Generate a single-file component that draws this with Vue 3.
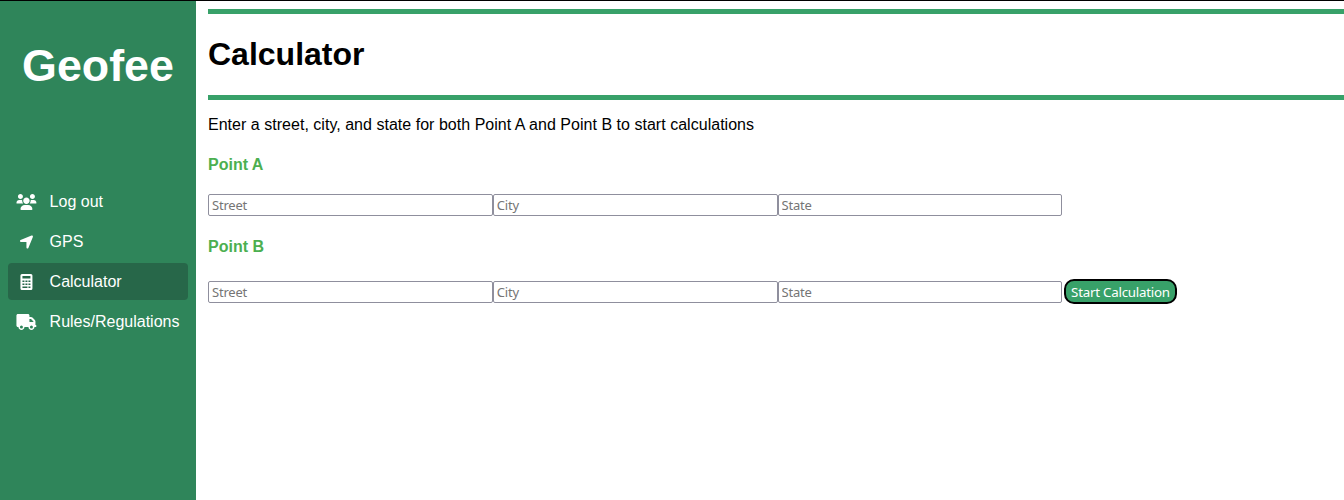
<script setup>
const links = [
  {
    label: 'Log out',
    width: 20,
    box: '-14 0 640 512',
    path: 'M319.9 320c57.41 0 103.1-46.56 103.1-104c0-57.44-46.54-104-103.1-104c-57.41 0-103.1 46.56-103.1 104C215.9 273.4 262.5 320 319.9 320zM369.9 352H270.1C191.6 352 128 411.7 128 485.3C128 500.1 140.7 512 156.4 512h327.2C499.3 512 512 500.1 512 485.3C512 411.7 448.4 352 369.9 352zM512 160c44.18 0 80-35.82 80-80S556.2 0 512 0c-44.18 0-80 35.82-80 80S467.8 160 512 160zM183.9 216c0-5.449 .9824-10.63 1.609-15.91C174.6 194.1 162.6 192 149.9 192H88.08C39.44 192 0 233.8 0 285.3C0 295.6 7.887 304 17.62 304h199.5C196.7 280.2 183.9 249.7 183.9 216zM128 160c44.18 0 80-35.82 80-80S172.2 0 128 0C83.82 0 48 35.82 48 80S83.82 160 128 160zM551.9 192h-61.84c-12.8 0-24.88 3.037-35.86 8.24C454.8 205.5 455.8 210.6 455.8 216c0 33.71-12.78 64.21-33.16 88h199.7C632.1 304 640 295.6 640 285.3C640 233.8 600.6 192 551.9 192z',
  },
  {
    label: 'GPS',
    width: 14,
    box: '-14 0 448 512',
    path: 'M429.6 92.1c4.9-11.9 2.1-25.6-7-34.7s-22.8-11.9-34.7-7l-352 144c-14.2 5.8-22.2 20.8-19.3 35.8s16.1 25.8 31.4 25.8H224V432c0 15.3 10.8 28.4 25.8 31.4s30-5.1 35.8-19.3l144-352z',
  },
  {
    label: 'Calculator',
    width: 12,
    box: '-14 0 384 512',
    active: true,
    path: 'M48 0H336Q384 0 384 48V464Q384 512 336 512H48Q0 512 0 464V48Q0 0 48 0zM64 64V144H320V64zM64 208V256H128V208zM160 208V256H224V208zM256 208V256H320V208zM64 304V352H128V304zM160 304V352H224V304zM256 304V352H320V304zM64 400V448H224V400zM256 400V448H320V400z',
  },
  {
    label: 'Rules/Regulations',
    width: 20,
    box: '-14 0 640 512',
    path: 'M48 0C21.5 0 0 21.5 0 48V368c0 26.5 21.5 48 48 48H64c0 53 43 96 96 96s96-43 96-96H384c0 53 43 96 96 96s96-43 96-96h32c17.7 0 32-14.3 32-32s-14.3-32-32-32V288 256 237.3c0-17-6.7-33.3-18.7-45.3L512 114.7c-12-12-28.3-18.7-45.3-18.7H416V48c0-26.5-21.5-48-48-48H48zM416 160h50.7L544 237.3V256H416V160zM112 416a48 48 0 1 1 96 0 48 48 0 1 1 -96 0zm368-48a48 48 0 1 1 0 96 48 48 0 1 1 0-96z',
  },
]
const fields = ['Street', 'City', 'State']
</script>

<template>
  <div class="page">
    <aside class="sidebar">
      <div class="brand">Geofee</div>
      <nav class="menu">
        <a v-for="l in links" :key="l.label" class="link" :class="{ active: l.active }">
          <span class="icon">
            <svg :width="l.width" height="16" :viewBox="l.box"><path :d="l.path" fill="currentColor" fill-rule="evenodd" /></svg>
          </span>
          <span>{{ l.label }}</span>
        </a>
      </nav>
    </aside>
    <main class="content">
      <header class="title"><h1>Calculator</h1></header>
      <p class="intro">Enter a street, city, and state for both Point A and Point B to start calculations</p>
      <h4 class="point">Point A</h4>
      <div class="row row-a">
        <input v-for="f in fields" :key="f" type="text" :placeholder="f" />
      </div>
      <h4 class="point">Point B</h4>
      <div class="row row-b">
        <input v-for="f in fields" :key="f" type="text" :placeholder="f" />
        <button type="button">Start Calculation</button>
      </div>
    </main>
  </div>
</template>

<style>
body {
  margin: 0;
  background: #fff;
}
</style>

<style scoped>
.page {
  box-sizing: border-box;
  display: flex;
  height: 500px;
  overflow: hidden;
  border-top: 1px solid #000;
  font-family: "Liberation Sans", Arial, sans-serif;
  font-size: 16px;
  line-height: 18px;
  color: #000;
}
.sidebar {
  box-sizing: border-box;
  flex: none;
  width: 196px;
  padding: 38px 8px 0;
  background: #2f855a;
  color: #fff;
}
.brand {
  height: 144px;
  font-size: 44.8px;
  font-weight: bold;
  line-height: 52px;
  text-align: center;
}
.menu {
  display: flex;
  flex-direction: column;
  gap: 3px;
}
.link {
  display: flex;
  align-items: center;
  height: 37px;
  padding-left: 8px;
  border-radius: 4px;
  white-space: nowrap;
}
.link.active {
  background: #276749;
}
.icon {
  display: flex;
  justify-content: center;
  width: 20px;
  margin-right: 13.6px;
}
.icon svg {
  overflow: visible;
}
.content {
  flex: 1;
  min-width: 0;
  padding: 8px 0 0 12px;
}
.title {
  box-sizing: border-box;
  height: 91px;
  padding-top: 22px;
  border-top: 5px solid #38a169;
  border-bottom: 5px solid #38a169;
}
h1 {
  margin: 0;
  font-size: 32px;
  line-height: 37px;
}
.intro {
  margin: 16px 0 22px;
  letter-spacing: 0.025px;
}
.point {
  margin: 0;
  font-size: 16px;
  color: #4caf50;
}
.row {
  display: flex;
  align-items: center;
}
.row-a {
  height: 22px;
  margin: 20px 0 22px;
}
.row-b {
  height: 26px;
  margin-top: 23px;
}
input {
  box-sizing: border-box;
  width: 284.8px;
  height: 22px;
  padding: 1px 3px;
  border: 1px solid #8f8f9d;
  border-radius: 2px;
  background: #fff;
  font-family: "Noto Sans", sans-serif;
  font-size: 13px;
  letter-spacing: -0.2px;
}
input::placeholder {
  color: #757575;
}
button {
  box-sizing: border-box;
  width: 113px;
  height: 25px;
  margin: 0 0 2px 1.6px;
  padding: 1px 0 0;
  border: 2px solid #000;
  border-radius: 10px;
  background: #38a169;
  color: #fff;
  font-family: "Noto Sans", sans-serif;
  font-size: 13.33px;
  letter-spacing: -0.24px;
  white-space: nowrap;
}
</style>
